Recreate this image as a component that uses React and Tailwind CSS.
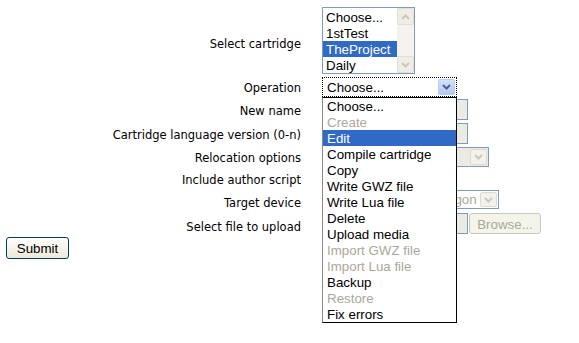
import React from 'react';

const Chevron = ({ color = '#4d6185', up = false }) => (
  <svg width="9" height="6" viewBox="0 0 9 6">
    <path
      d={up ? 'M1 5 L4.5 1.5 L8 5' : 'M1 1 L4.5 4.5 L8 1'}
      fill="none"
      stroke={color}
      strokeWidth="2"
    />
  </svg>
);

// pt shifts the centred text down by half its value
const Label = ({ children, pt = 'pt-[4px]' }) => (
  <div className={`w-[301px] shrink-0 text-right text-black ${pt}`}>{children}</div>
);

const DisabledArrow = () => (
  <div className="flex h-full w-[17px] items-center justify-center rounded-[2px] border border-[#dcdbd3] bg-[#f2f1ea]">
    <Chevron color="#c9c8bd" />
  </div>
);

const operations = [
  { label: 'Choose...' },
  { label: 'Create', disabled: true },
  { label: 'Edit', selected: true },
  { label: 'Compile cartridge' },
  { label: 'Copy' },
  { label: 'Write GWZ file' },
  { label: 'Write Lua file' },
  { label: 'Delete' },
  { label: 'Upload media' },
  { label: 'Import GWZ file', disabled: true },
  { label: 'Import Lua file', disabled: true },
  { label: 'Backup' },
  { label: 'Restore', disabled: true },
  { label: 'Fix errors' },
];

const cartridges = ['Choose...', '1stTest', 'TheProject', 'Daily'];

const App = () => {
  const arial = "font-['Liberation_Sans',Arial,sans-serif] text-[13.33px]";

  return (
    <div className="relative h-[343px] w-[579px] bg-white pt-[7px] font-['DejaVu_Sans',Verdana,sans-serif] text-[11.5px]">
      {/* Select cartridge */}
      <div className="flex h-[67px] items-center">
        <Label pt="pt-[8px]">Select cartridge</Label>
        <div className={`ml-[21px] flex h-[67px] w-[93px] border border-[#7f9db9] bg-white ${arial}`}>
          <div className="flex-1 pt-[1px]">
            {cartridges.map((c) => (
              <div
                key={c}
                className={`h-[16px] overflow-hidden pl-[3px] leading-[18px] ${c === 'TheProject' ? 'bg-[#316ac5] text-white' : 'text-black'}`}
              >
                {c}
              </div>
            ))}
          </div>
          <div className="flex w-[17px] flex-col bg-[#f4f3ee]">
            <div className="flex h-[17px] items-center justify-center rounded-[2px] border border-[#e0dfd6] bg-[#efeee6]">
              <Chevron color="#c9c8bd" up />
            </div>
            <div className="flex-1" />
            <div className="flex h-[17px] items-center justify-center rounded-[2px] border border-[#e0dfd6] bg-[#efeee6]">
              <Chevron color="#c9c8bd" />
            </div>
          </div>
        </div>
      </div>

      {/* Operation */}
      <div className="mt-[3px] flex h-[20px] items-center">
        <Label>Operation</Label>
        <div className={`ml-[21px] flex h-[20px] w-[135px] border border-dotted border-black bg-white p-[1px] ${arial}`}>
          <div className="flex-1 pl-[3px] leading-[18px] text-black">Choose...</div>
          <div className="flex w-[17px] items-center justify-center rounded-[2px] border border-[#b9cdf6] bg-gradient-to-b from-[#d3e1fd] to-[#b3c8f5]">
            <Chevron />
          </div>
        </div>
      </div>

      {/* New name */}
      <div className="mt-[2px] flex h-[21px] items-center">
        <Label>New name</Label>
        <div className="ml-[21px] h-[21px] w-[146px] border border-[#7f9db9] bg-[#ebebe4]" />
      </div>

      {/* Language version */}
      <div className="mt-[3px] flex h-[21px] items-center">
        <Label>Cartridge language version (0-n)</Label>
        <div className="ml-[21px] h-[21px] w-[146px] border border-[#7f9db9] bg-[#ebebe4]" />
      </div>

      {/* Relocation */}
      <div className="mt-[3px] flex h-[20px] items-center">
        <Label>Relocation options</Label>
        <div className="ml-[21px] flex h-[20px] w-[167px] border border-[#7f9db9] bg-[#ebebe4] p-[1px]">
          <div className="flex-1" />
          <DisabledArrow />
        </div>
      </div>

      {/* Author script */}
      <div className="mt-[2px] flex h-[20px] items-center">
        <Label>Include author script</Label>
        <div className="ml-[25px] h-[13px] w-[13px] border border-[#cac8bb] bg-[#f2f1ea]" />
      </div>

      {/* Target device */}
      <div className="mt-[1px] flex h-[19px] items-center">
        <Label pt="pt-[8px]">Target device</Label>
        <div className={`ml-[21px] flex h-[19px] w-[177px] border border-[#7f9db9] bg-white p-[1px] ${arial}`}>
          <div className="flex-1 overflow-hidden whitespace-nowrap pl-[3px] leading-[16px] text-[#aca899]">
            Garmin Colorado/Oregon
          </div>
          <DisabledArrow />
        </div>
      </div>

      {/* File upload */}
      <div className="mt-[4px] flex h-[21px] items-center">
        <Label pt="pt-[8px]">Select file to upload</Label>
        <div className={`ml-[21px] flex h-[21px] items-center ${arial}`}>
          <div className="h-[21px] w-[146px] border border-[#7f9db9] bg-[#ebebe4]" />
          <div className="ml-[1px] flex h-[21px] w-[72px] items-center justify-center rounded-[3px] border border-[#cac8bb] bg-[#f5f4ea] pt-[2px] text-[#aca899]">
            Browse...
          </div>
        </div>
      </div>

      {/* Submit */}
      <div className="mt-[3px] pl-[6px]">
        <button
          className={`flex h-[22px] w-[63px] items-center justify-center rounded-[3px] border border-[#003c74] bg-gradient-to-b from-white to-[#ece9d8] pt-[2px] text-black ${arial}`}
        >
          Submit
        </button>
      </div>

      {/* Open dropdown list */}
      <div className={`absolute left-[322px] top-[97px] w-[135px] border border-black border-l-[#8a8a8a] bg-white ${arial}`}>
        {operations.map((op) => (
          <div
            key={op.label}
            className={`h-[16px] overflow-hidden whitespace-nowrap pl-[4px] leading-[18px] ${
              op.selected ? 'bg-[#316ac5] text-white' : op.disabled ? 'text-[#aca899]' : 'text-black'
            }`}
          >
            {op.label}
          </div>
        ))}
      </div>
    </div>
  );
};

export default App;
